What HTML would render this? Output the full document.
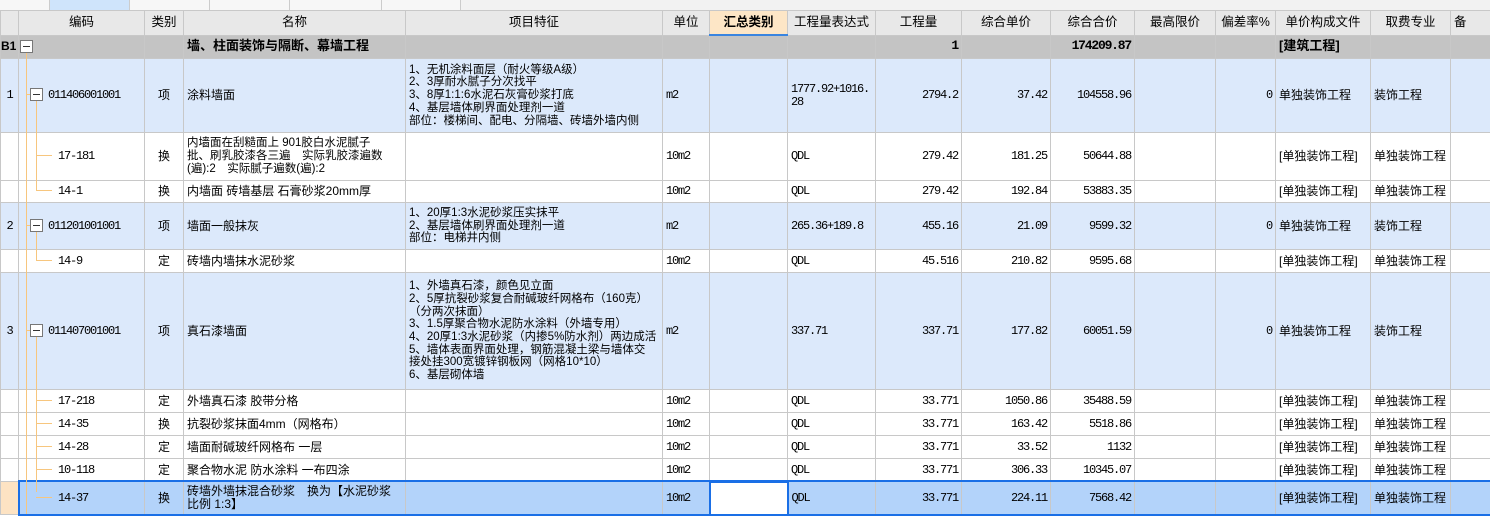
<!DOCTYPE html>
<html><head><meta charset="utf-8"><style>
body{margin:0;width:1490px;height:516px;overflow:hidden;background:#fff;font-family:"Liberation Sans","Noto Sans CJK SC",sans-serif;font-size:12px;color:#000;position:relative}
.tabs{position:absolute;left:0;top:0;width:1490px;height:10px;background:#f2f2f2;border-bottom:1px solid #ddd}
.tab{position:absolute;top:0;height:10px;border-right:1px solid #ccc;background:#f7f7f7}
table{position:absolute;left:0;top:10px;border-collapse:collapse;table-layout:fixed;width:1490px}
td{border:1px solid #c8c8c8;padding:0 3px;overflow:hidden;white-space:nowrap;line-height:12.7px;vertical-align:middle}
tr.h td{background:#e8e8e8;text-align:center;font-size:12.5px;height:23px}
tr.b td{background:#c4c4c4;font-weight:bold;font-size:13px;height:22px}
tr.i td{background:#dce9fb}
tr.s td{background:#b3d3fa}
.c{text-align:center}.r{text-align:right}
.f{font-size:11.5px}
.n{font-family:"Liberation Mono","Noto Sans CJK SC",monospace;font-size:12px;letter-spacing:-1.2px}
.vl{position:absolute;width:1px;background:#f7c67e}
.hl{position:absolute;height:1px;background:#f7c67e}
.bx{position:absolute;width:11px;height:11px;border:1px solid #777;background:#fff}
.bx:after{content:"";position:absolute;left:2px;top:5px;width:7px;height:1px;background:#333}
</style></head><body>
<div class="tabs">
<div class="tab" style="left:0;width:49px"></div>
<div class="tab" style="left:50px;width:79px;background:#cfe4fb"></div>
<div class="tab" style="left:130px;width:79px"></div>
<div class="tab" style="left:210px;width:79px"></div>
<div class="tab" style="left:290px;width:91px"></div>
<div class="tab" style="left:382px;width:78px"></div>
</div>
<table>
<colgroup><col style="width:18px"><col style="width:126px"><col style="width:39px"><col style="width:222px"><col style="width:257px"><col style="width:47px"><col style="width:78px"><col style="width:88px"><col style="width:86px"><col style="width:89px"><col style="width:84px"><col style="width:81px"><col style="width:60px"><col style="width:95px"><col style="width:80px"><col style="width:40px"></colgroup>
<tr class="h"><td></td><td>编码</td><td>类别</td><td>名称</td><td>项目特征</td><td>单位</td><td style="background:#fde6c6;font-weight:bold;border-bottom:2px solid #3a85e0">汇总类别</td><td>工程量表达式</td><td>工程量</td><td>综合单价</td><td>综合合价</td><td>最高限价</td><td>偏差率%</td><td>单价构成文件</td><td>取费专业</td><td style="text-align:left">备</td></tr>
<tr class="b"><td style="padding:0;font-size:12px">B1</td><td></td><td></td><td>墙、柱面装饰与隔断、幕墙工程</td><td></td><td></td><td></td><td></td><td class="r n" style="font-weight:bold">1</td><td></td><td class="r n" style="font-weight:bold">174209.87</td><td></td><td></td><td>[建筑工程]</td><td></td><td></td></tr>
<tr class="i"><td class="c n" style="height:73px;padding:0">1</td><td class="n" style="padding-left:29px">011406001001</td><td class="c">项</td><td>涂料墙面</td><td class="f">1、无机涂料面层（耐火等级A级）<br>2、3厚耐水腻子分次找平<br>3、8厚1:1:6水泥石灰膏砂浆打底<br>4、基层墙体刷界面处理剂一道<br>部位：楼梯间、配电、分隔墙、砖墙外墙内侧</td><td class="n">m2</td><td></td><td class="n">1777.92+1016.<br>28</td><td class="r n">2794.2</td><td class="r n">37.42</td><td class="r n">104558.96</td><td></td><td class="r n">0</td><td>单独装饰工程</td><td>装饰工程</td><td></td></tr>
<tr><td style="height:47px"></td><td class="n" style="padding-left:39px">17-181</td><td class="c">换</td><td class="f">内墙面在刮糙面上 901胶白水泥腻子<br>批、刷乳胶漆各三遍　实际乳胶漆遍数<br>(遍):2　实际腻子遍数(遍):2</td><td></td><td class="n">10m2</td><td></td><td class="n">QDL</td><td class="r n">279.42</td><td class="r n">181.25</td><td class="r n">50644.88</td><td></td><td></td><td>[单独装饰工程]</td><td>单独装饰工程</td><td></td></tr>
<tr><td style="height:21px"></td><td class="n" style="padding-left:39px">14-1</td><td class="c">换</td><td>内墙面 砖墙基层 石膏砂浆20mm厚</td><td></td><td class="n">10m2</td><td></td><td class="n">QDL</td><td class="r n">279.42</td><td class="r n">192.84</td><td class="r n">53883.35</td><td></td><td></td><td>[单独装饰工程]</td><td>单独装饰工程</td><td></td></tr>
<tr class="i"><td class="c n" style="height:46px;padding:0">2</td><td class="n" style="padding-left:29px">011201001001</td><td class="c">项</td><td>墙面一般抹灰</td><td class="f">1、20厚1:3水泥砂浆压实抹平<br>2、基层墙体刷界面处理剂一道<br>部位：电梯井内侧</td><td class="n">m2</td><td></td><td class="n">265.36+189.8</td><td class="r n">455.16</td><td class="r n">21.09</td><td class="r n">9599.32</td><td></td><td class="r n">0</td><td>单独装饰工程</td><td>装饰工程</td><td></td></tr>
<tr><td style="height:22px"></td><td class="n" style="padding-left:39px">14-9</td><td class="c">定</td><td>砖墙内墙抹水泥砂浆</td><td></td><td class="n">10m2</td><td></td><td class="n">QDL</td><td class="r n">45.516</td><td class="r n">210.82</td><td class="r n">9595.68</td><td></td><td></td><td>[单独装饰工程]</td><td>单独装饰工程</td><td></td></tr>
<tr class="i"><td class="c n" style="height:116px;padding:0">3</td><td class="n" style="padding-left:29px">011407001001</td><td class="c">项</td><td>真石漆墙面</td><td class="f">1、外墙真石漆，颜色见立面<br>2、5厚抗裂砂浆复合耐碱玻纤网格布（160克）<br>（分两次抹面）<br>3、1.5厚聚合物水泥防水涂料（外墙专用）<br>4、20厚1:3水泥砂浆（内掺5%防水剂）两边成活<br>5、墙体表面界面处理，钢筋混凝土梁与墙体交<br>接处挂300宽镀锌钢板网（网格10*10）<br>6、基层砌体墙</td><td class="n">m2</td><td></td><td class="n">337.71</td><td class="r n">337.71</td><td class="r n">177.82</td><td class="r n">60051.59</td><td></td><td class="r n">0</td><td>单独装饰工程</td><td>装饰工程</td><td></td></tr>
<tr><td style="height:22px"></td><td class="n" style="padding-left:39px">17-218</td><td class="c">定</td><td>外墙真石漆 胶带分格</td><td></td><td class="n">10m2</td><td></td><td class="n">QDL</td><td class="r n">33.771</td><td class="r n">1050.86</td><td class="r n">35488.59</td><td></td><td></td><td>[单独装饰工程]</td><td>单独装饰工程</td><td></td></tr>
<tr><td style="height:22px"></td><td class="n" style="padding-left:39px">14-35</td><td class="c">换</td><td>抗裂砂浆抹面4mm（网格布）</td><td></td><td class="n">10m2</td><td></td><td class="n">QDL</td><td class="r n">33.771</td><td class="r n">163.42</td><td class="r n">5518.86</td><td></td><td></td><td>[单独装饰工程]</td><td>单独装饰工程</td><td></td></tr>
<tr><td style="height:22px"></td><td class="n" style="padding-left:39px">14-28</td><td class="c">定</td><td>墙面耐碱玻纤网格布 一层</td><td></td><td class="n">10m2</td><td></td><td class="n">QDL</td><td class="r n">33.771</td><td class="r n">33.52</td><td class="r n">1132</td><td></td><td></td><td>[单独装饰工程]</td><td>单独装饰工程</td><td></td></tr>
<tr><td style="height:22px"></td><td class="n" style="padding-left:39px">10-118</td><td class="c">定</td><td>聚合物水泥 防水涂料 一布四涂</td><td></td><td class="n">10m2</td><td></td><td class="n">QDL</td><td class="r n">33.771</td><td class="r n">306.33</td><td class="r n">10345.07</td><td></td><td></td><td>[单独装饰工程]</td><td>单独装饰工程</td><td></td></tr>
<tr class="s"><td style="height:32px;background:#fde3c3"></td><td class="n" style="padding-left:39px">14-37</td><td class="c">换</td><td>砖墙外墙抹混合砂浆　换为【水泥砂浆<br>比例 1:3】</td><td></td><td class="n">10m2</td><td style="background:#fff;border:2px solid #1a6fe6"></td><td class="n">QDL</td><td class="r n">33.771</td><td class="r n">224.11</td><td class="r n">7568.42</td><td></td><td></td><td>[单独装饰工程]</td><td>单独装饰工程</td><td></td></tr>
</table>
<div style="position:absolute;left:18px;top:480px;width:1470px;height:32px;border:2px solid #1a6fe6;pointer-events:none"></div>
<div class="vl" style="left:26px;top:52px;height:462px"></div>
<div class="vl" style="left:36px;top:100px;height:90px"></div>
<div class="vl" style="left:36px;top:231px;height:29px"></div>
<div class="vl" style="left:36px;top:336px;height:156px"></div>
<div class="hl" style="left:26px;top:94px;width:5px"></div>
<div class="hl" style="left:26px;top:225px;width:5px"></div>
<div class="hl" style="left:26px;top:330px;width:5px"></div>
<div class="hl" style="left:36px;top:155px;width:16px"></div>
<div class="hl" style="left:36px;top:190px;width:16px"></div>
<div class="hl" style="left:36px;top:260px;width:16px"></div>
<div class="hl" style="left:36px;top:400px;width:16px"></div>
<div class="hl" style="left:36px;top:423px;width:16px"></div>
<div class="hl" style="left:36px;top:446px;width:16px"></div>
<div class="hl" style="left:36px;top:469px;width:16px"></div>
<div class="hl" style="left:36px;top:497px;width:16px"></div>
<div class="bx" style="left:20px;top:40px"></div>
<div class="bx" style="left:30px;top:88px"></div>
<div class="bx" style="left:30px;top:219px"></div>
<div class="bx" style="left:30px;top:324px"></div>
</body></html>
